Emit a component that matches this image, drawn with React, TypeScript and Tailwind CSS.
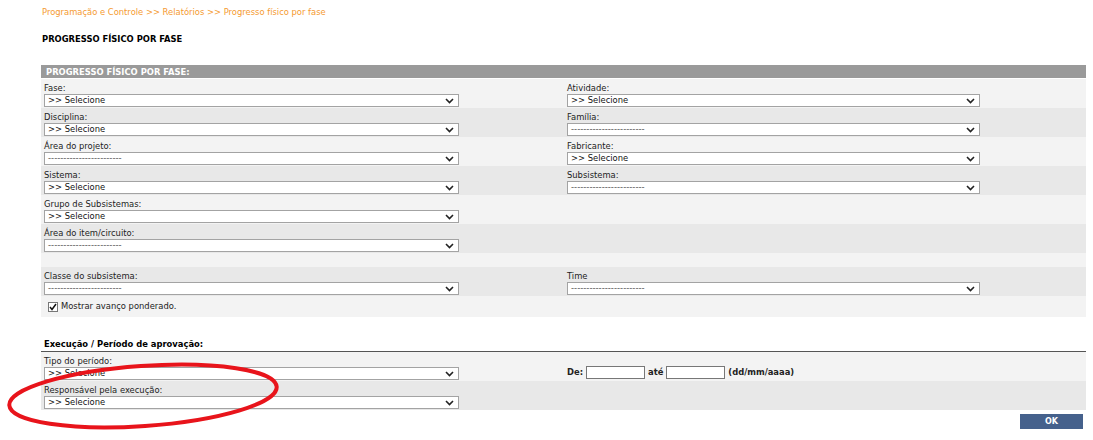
import React from "react";

type Field = { label: string; value: "sel" | "dash" };

const ROWS: { left?: Field; right?: Field; tone: "light" | "dark" }[] = [
  { left: { label: "Fase:", value: "sel" }, right: { label: "Atividade:", value: "sel" }, tone: "light" },
  { left: { label: "Disciplina:", value: "sel" }, right: { label: "Família:", value: "dash" }, tone: "dark" },
  { left: { label: "Área do projeto:", value: "dash" }, right: { label: "Fabricante:", value: "sel" }, tone: "light" },
  { left: { label: "Sistema:", value: "sel" }, right: { label: "Subsistema:", value: "dash" }, tone: "dark" },
  { left: { label: "Grupo de Subsistemas:", value: "sel" }, tone: "light" },
  { left: { label: "Área do item/circuito:", value: "dash" }, tone: "dark" },
];

function Chevron() {
  return (
    <svg width="9" height="6" viewBox="0 0 9 6" className="shrink-0">
      <polyline points="1,1 4.5,4.5 8,1" fill="none" stroke="#222" strokeWidth="1.6" />
    </svg>
  );
}

function SelectBox({ value, wide }: { value: "sel" | "dash"; wide?: boolean }) {
  return (
    <div
      className={`flex h-[13px] items-center justify-between border border-[#a3a3a3] bg-white pl-[3px] pr-[4px] ${
        wide ? "w-[415px]" : "w-[413px]"
      }`}
    >
      {value === "sel" ? (
        <span className="leading-none text-[#111]">&gt;&gt; Selecione</span>
      ) : (
        <span className="text-[8.5px] leading-none text-[#555]">------------------------</span>
      )}
      <Chevron />
    </div>
  );
}

function Cell({ field, wide }: { field?: Field; wide?: boolean }) {
  if (!field) return <div />;
  return (
    <div className="pt-[4px]">
      <div className="h-[10px] leading-[10px] text-[#222]">{field.label}</div>
      <div className="mt-[1px]">
        <SelectBox value={field.value} wide={wide} />
      </div>
    </div>
  );
}

function Row({ left, right, tone }: { left?: Field; right?: Field; tone: "light" | "dark" }) {
  return (
    <div className={`grid h-[29px] grid-cols-[526px_1fr] ${tone === "light" ? "bg-[#f3f3f3]" : "bg-[#e8e8e8]"}`}>
      <div className="pl-[3px]">
        <Cell field={left} wide />
      </div>
      <Cell field={right} />
    </div>
  );
}

export default function App() {
  return (
    <div className="relative h-[440px] w-[1093px] overflow-hidden bg-white font-['DejaVu_Sans',sans-serif] text-[8.4px] text-[#111]">
      <div className="pl-[42px] pt-[7px] leading-[10px] text-[#f59a2f]">
        Programação e Controle &gt;&gt; Relatórios &gt;&gt; Progresso físico por fase
      </div>
      <div className="mt-[17px] pl-[42px] font-bold leading-[10px] text-black">PROGRESSO FÍSICO POR FASE</div>

      <div className="ml-[41px] mt-[21px] w-[1045px]">
        <div className="h-[14px] border-b border-white bg-[#9a9a9a] pl-[5px] font-bold leading-[14px] text-white">
          PROGRESSO FÍSICO POR FASE:
        </div>
        {ROWS.map((r, i) => (
          <Row key={i} left={r.left} right={r.right} tone={r.tone} />
        ))}
        <div className="h-[14px] bg-[#f3f3f3]" />
        <Row
          left={{ label: "Classe do subsistema:", value: "dash" }}
          right={{ label: "Time", value: "dash" }}
          tone="dark"
        />
        <div className="flex h-[21px] items-center bg-[#f3f3f3] pl-[7px]">
          <span className="flex h-[10px] w-[10px] items-center justify-center border border-[#777] bg-white">
            <svg width="8" height="8" viewBox="0 0 8 8">
              <polyline points="1,4 3,6.5 7,1" fill="none" stroke="#111" strokeWidth="1.5" />
            </svg>
          </span>
          <span className="ml-[3px] text-[#222]">Mostrar avanço ponderado.</span>
        </div>

        <div className="mt-[22px] pl-[3px] font-bold leading-[10px] text-black">Execução / Período de aprovação:</div>
        <div className="mt-[2px] h-[1px] bg-[#555]" />
        <div className="grid h-[29px] grid-cols-[526px_1fr] bg-[#f3f3f3]">
          <div className="pl-[3px]">
            <Cell field={{ label: "Tipo do período:", value: "sel" }} wide />
          </div>
          <div className="flex items-end pb-[2px]">
            <div className="flex items-center gap-[3px] font-bold text-[#222]">
              <span>De:</span>
              <span className="h-[13px] w-[59px] border border-[#777] bg-white" />
              <span>até</span>
              <span className="h-[13px] w-[59px] border border-[#777] bg-white" />
              <span>(dd/mm/aaaa)</span>
            </div>
          </div>
        </div>
        <Row left={{ label: "Responsável pela execução:", value: "sel" }} tone="dark" />
        <div className="mt-[4px] flex justify-end pr-[3px]">
          <div className="flex h-[15px] w-[63px] items-center justify-center bg-[#45618c] text-[8px] font-bold text-white">
            OK
          </div>
        </div>
      </div>

      <svg className="pointer-events-none absolute left-0 top-[355px]" width="300" height="84" viewBox="0 0 300 84">
        <ellipse
          cx="143"
          cy="41"
          rx="134"
          ry="30"
          fill="none"
          stroke="#e8141b"
          strokeWidth="4"
          transform="rotate(-4 143 41)"
        />
      </svg>
    </div>
  );
}
